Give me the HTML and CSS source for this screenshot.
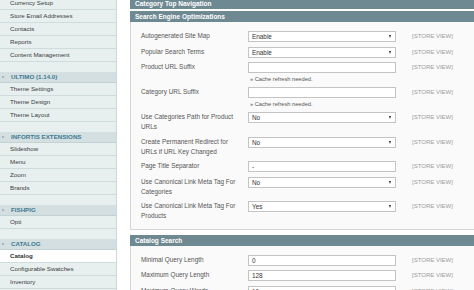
FILE: index.html
```html
<!DOCTYPE html>
<html lang="en">
<head>
    <meta charset="UTF-8">
    <title>Configuration / Catalog</title>
    <link rel="stylesheet" href="styles.css">
</head>
<body>
    <div class="page">
        <div class="side-col">
            <ul class="tabs">
                <li><a href="#">Currency Setup</a></li>
                <li><a href="#">Store Email Addresses</a></li>
                <li><a href="#">Contacts</a></li>
                <li><a href="#">Reports</a></li>
                <li><a href="#">Content Management</a></li>
            </ul>
            <div class="group-title">ULTIMO (1.14.0)</div>
            <ul class="tabs">
                <li><a href="#">Theme Settings</a></li>
                <li><a href="#">Theme Design</a></li>
                <li><a href="#">Theme Layout</a></li>
            </ul>
            <div class="group-title">INFORTIS EXTENSIONS</div>
            <ul class="tabs">
                <li><a href="#">Slideshow</a></li>
                <li><a href="#">Menu</a></li>
                <li><a href="#">Zoom</a></li>
                <li><a href="#">Brands</a></li>
            </ul>
            <div class="group-title">FISHPIG</div>
            <ul class="tabs">
                <li><a href="#">Opti</a></li>
            </ul>
            <div class="group-title">CATALOG</div>
            <ul class="tabs">
                <li class="active"><a href="#">Catalog</a></li>
                <li><a href="#">Configurable Swatches</a></li>
                <li><a href="#">Inventory</a></li>
            </ul>
        </div>

        <div class="main-col">
            <div class="section-head">Category Top Navigation</div>
            <div class="section-head">Search Engine Optimizations</div>
            <fieldset class="section-body">
                <table class="form-list">
                    <tr>
                        <td class="label">Autogenerated Site Map</td>
                        <td class="value"><span class="select-wrap"><select><option>Enable</option></select></span></td>
                        <td class="scope">[STORE VIEW]</td>
                    </tr>
                    <tr>
                        <td class="label">Popular Search Terms</td>
                        <td class="value"><span class="select-wrap"><select><option>Enable</option></select></span></td>
                        <td class="scope">[STORE VIEW]</td>
                    </tr>
                    <tr>
                        <td class="label">Product URL Suffix</td>
                        <td class="value">
                            <input type="text" value="">
                            <p class="note">&raquo; Cache refresh needed.</p>
                        </td>
                        <td class="scope">[STORE VIEW]</td>
                    </tr>
                    <tr>
                        <td class="label">Category URL Suffix</td>
                        <td class="value">
                            <input type="text" value="">
                            <p class="note">&raquo; Cache refresh needed.</p>
                        </td>
                        <td class="scope">[STORE VIEW]</td>
                    </tr>
                    <tr>
                        <td class="label">Use Categories Path for Product URLs</td>
                        <td class="value"><span class="select-wrap"><select><option>No</option></select></span></td>
                        <td class="scope">[STORE VIEW]</td>
                    </tr>
                    <tr>
                        <td class="label">Create Permanent Redirect for URLs if URL Key Changed</td>
                        <td class="value"><span class="select-wrap"><select><option>No</option></select></span></td>
                        <td class="scope">[STORE VIEW]</td>
                    </tr>
                    <tr>
                        <td class="label">Page Title Separator</td>
                        <td class="value"><input type="text" value="-"></td>
                        <td class="scope">[STORE VIEW]</td>
                    </tr>
                    <tr>
                        <td class="label">Use Canonical Link Meta Tag For Categories</td>
                        <td class="value"><span class="select-wrap"><select><option>No</option></select></span></td>
                        <td class="scope">[STORE VIEW]</td>
                    </tr>
                    <tr>
                        <td class="label">Use Canonical Link Meta Tag For Products</td>
                        <td class="value"><span class="select-wrap"><select><option>Yes</option></select></span></td>
                        <td class="scope">[STORE VIEW]</td>
                    </tr>
                </table>
            </fieldset>

            <div class="section-head">Catalog Search</div>
            <fieldset class="section-body">
                <table class="form-list">
                    <tr>
                        <td class="label">Minimal Query Length</td>
                        <td class="value"><input type="text" value="0"></td>
                        <td class="scope">[STORE VIEW]</td>
                    </tr>
                    <tr>
                        <td class="label">Maximum Query Length</td>
                        <td class="value"><input type="text" value="128"></td>
                        <td class="scope">[STORE VIEW]</td>
                    </tr>
                    <tr>
                        <td class="label">Maximum Query Words</td>
                        <td class="value"><input type="text" value="10"></td>
                        <td class="scope">[STORE VIEW]</td>
                    </tr>
                </table>
            </fieldset>
        </div>
    </div>
</body>
</html>
```

FILE: styles.css
```css
html, body {
    margin: 0;
    overflow: hidden;
    background-color: #fff;
    font-family: "Liberation Sans", Arial, sans-serif;
    color: #333;
}
.page {
    display: flex;
    align-items: flex-start;
}

/* left menu */
.side-col {
    flex: none;
    width: 116px;
    margin-top: -3px;
    background-color: #e7efef;
    border-right: 1px solid #c9d7d7;
}
.tabs {
    list-style: none;
    margin: 0 0 10px;
    padding: 0;
}
.tabs a {
    display: block;
    height: 12px;
    line-height: 12px;
    padding-left: 10px;
    border-bottom: 1px solid #cfdcdc;
    font-size: 6.2px;
    color: #3c3c3c;
    text-decoration: none;
}
.tabs li.active a {
    background-color: #fff;
    font-weight: bold;
    color: #2f2f2f;
}
.group-title {
    height: 10px;
    line-height: 10px;
    padding-left: 2px;
    background-color: #d3dfe0;
    border-bottom: 1px solid #c2d2d3;
    font-size: 6.2px;
    font-weight: bold;
    color: #3f7b93;
}
.group-title::before {
    content: "";
    display: inline-block;
    vertical-align: middle;
    margin: -1px 6px 0 0;
    border-top: 1.5px solid transparent;
    border-bottom: 1.5px solid transparent;
    border-left: 3px solid #8fa9b0;
}

/* config sections */
.main-col {
    flex: none;
    width: 360px;
    margin-left: 13px;
    margin-top: -2px;
}
.section-head {
    height: 11px;
    line-height: 11px;
    padding: 0 5px;
    background-color: #6f8992;
    color: #fff;
    font-size: 6.5px;
    font-weight: bold;
}
.section-head + .section-head {
    margin-top: 2px;
}
.section-body {
    margin: 0;
    min-width: 0;
    padding: 7px 10px 5px;
    background-color: #fafafa;
    border: 1px solid #d6d6d6;
    border-top: none;
}
.section-body + .section-head {
    margin-top: 5px;
}
.form-list {
    border-collapse: collapse;
    border-spacing: 0;
}
.form-list td {
    padding: 2px 0 2.5px;
    vertical-align: top;
}
.form-list td.label {
    width: 101px;
    padding-right: 6px;
    line-height: 10px;
    font-size: 6.4px;
    color: #555;
}
.form-list td.value {
    width: 148px;
    padding-right: 16px;
}
.form-list td.scope {
    line-height: 11px;
    font-size: 6px;
    color: #9a9a9a;
    white-space: nowrap;
}
.form-list input,
.form-list select {
    display: block;
    box-sizing: border-box;
    width: 148px;
    height: 11px;
    margin: 0;
    padding: 0 3px;
    border: 1px solid #c4c4c4;
    border-radius: 0;
    background-color: #fff;
    font-family: "Liberation Sans", Arial, sans-serif;
    font-size: 6.4px;
    line-height: 9px;
    color: #333;
    -webkit-appearance: none;
    appearance: none;
    outline: none;
}
.select-wrap {
    display: block;
    position: relative;
}
.select-wrap::after {
    content: "";
    position: absolute;
    right: 5px;
    top: 4px;
    border-left: 1.5px solid transparent;
    border-right: 1.5px solid transparent;
    border-top: 3px solid #222;
}
.note {
    margin: 1.5px 0 0 2px;
    line-height: 8px;
    font-size: 5.7px;
    color: #555;
}
```
